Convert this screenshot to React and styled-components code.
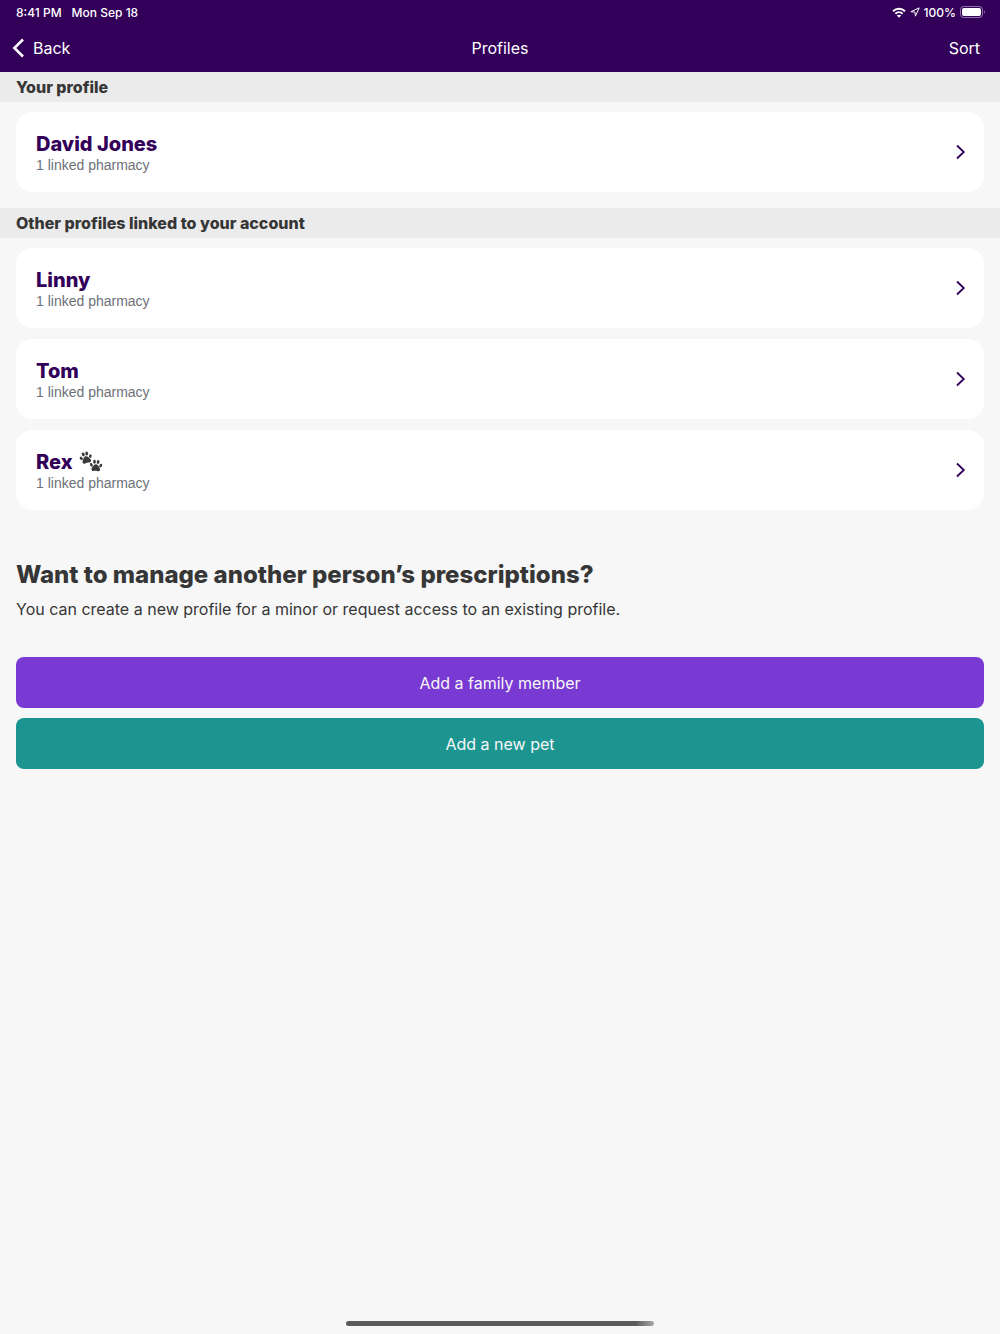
import React from "react";
import styled, { createGlobalStyle } from "styled-components";

const linkedProfiles = [
  { name: "Linny", pharmacies: "1 linked pharmacy" },
  { name: "Tom", pharmacies: "1 linked pharmacy" },
  { name: "Rex", pharmacies: "1 linked pharmacy", pet: true },
];

function PawPrint({ x, y, turn }) {
  return (
    <g transform={`translate(${x} ${y}) rotate(${turn})`}>
      <ellipse cx="-4.7" cy="-0.8" rx="1.3" ry="1.9" transform="rotate(-25 -4.7 -0.8)" />
      <ellipse cx="-1.8" cy="-4.2" rx="1.4" ry="2" transform="rotate(-8 -1.8 -4.2)" />
      <ellipse cx="1.8" cy="-4.2" rx="1.4" ry="2" transform="rotate(8 1.8 -4.2)" />
      <ellipse cx="4.7" cy="-0.8" rx="1.3" ry="1.9" transform="rotate(25 4.7 -0.8)" />
      <path d="M0-1.7C2-1.7 2.5.2 3.6 1.4 5.2 3.2 4 5.6 2 5.1.9 4.8-.9 4.8-2 5.1-4 5.6-5.2 3.2-3.6 1.4-2.5.2-2-1.7 0-1.7Z" />
    </g>
  );
}

function ProfileCard({ name, pharmacies, pet }) {
  return (
    <Card type="button">
      <CardText>
        <CardName>
          {name}
          {pet && (
            <svg width="24" height="22" viewBox="0 0 24 22" fill="#3a3a3a" aria-hidden="true">
              <PawPrint x={7} y={7} turn={-14} />
              <PawPrint x={17} y={15} turn={4} />
            </svg>
          )}
        </CardName>
        <CardDetail>{pharmacies}</CardDetail>
      </CardText>
      <svg width="10" height="16" viewBox="0 0 10 16" fill="none" stroke="#330059" strokeWidth="1.8" aria-hidden="true">
        <path d="M1 1.5 7.8 8 1 14.5" />
      </svg>
    </Card>
  );
}

function App() {
  return (
    <>
      <GlobalStyle />
      <Page>
        <Header>
          <StatusBar>
            <StatusGroup $gap="10px">
              <span>8:41 PM</span>
              <span>Mon Sep 18</span>
            </StatusGroup>
            <StatusGroup $gap="4px">
              <svg width="14" height="11" viewBox="0 0 14 11" fill="none" stroke="#fff" strokeWidth="2" aria-hidden="true">
                <path d="M1 4.2C4.4.8 9.6.8 13 4.2" />
                <path d="M3.4 6.7C5.4 4.8 8.6 4.8 10.6 6.7" />
                <path d="M7 10.8 4.9 8.6C6.1 7.5 7.9 7.5 9.1 8.6Z" fill="#fff" stroke="none" />
              </svg>
              <svg width="10" height="10" viewBox="0 0 10 10" fill="none" stroke="#fff" strokeLinejoin="round" aria-hidden="true">
                <path d="M9.2.9.9 4.7 5 5.1 5.4 9.2Z" />
              </svg>
              <span>100%</span>
              <svg width="25" height="12" viewBox="0 0 25 12" aria-hidden="true">
                <rect x=".5" y=".5" width="22" height="11" rx="3.2" fill="none" stroke="#fff" strokeOpacity=".45" />
                <rect x="2" y="2" width="19" height="8" rx="2" fill="#fff" />
                <path d="M24 4.2C25.1 4.8 25.1 7.2 24 7.8Z" fill="#fff" fillOpacity=".5" />
              </svg>
            </StatusGroup>
          </StatusBar>
          <NavBar>
            <NavButton type="button">
              <svg width="13" height="20" viewBox="0 0 13 20" fill="none" stroke="#fff" strokeWidth="2.6" aria-hidden="true">
                <path d="M11 1.5 2.4 10 11 18.5" />
              </svg>
              Back
            </NavButton>
            <Title>Profiles</Title>
            <NavButton type="button" $end>
              Sort
            </NavButton>
          </NavBar>
        </Header>

        <SectionHeading>Your profile</SectionHeading>
        <CardList>
          <ProfileCard name="David Jones" pharmacies="1 linked pharmacy" />
        </CardList>

        <SectionHeading>Other profiles linked to your account</SectionHeading>
        <CardList>
          {linkedProfiles.map((profile) => (
            <ProfileCard key={profile.name} {...profile} />
          ))}
        </CardList>

        <Manage>
          <h2>Want to manage another person’s prescriptions?</h2>
          <p>You can create a new profile for a minor or request access to an existing profile.</p>
          <Actions>
            <ActionButton type="button" $color="#793ad3">
              Add a family member
            </ActionButton>
            <ActionButton type="button" $color="#1c9591">
              Add a new pet
            </ActionButton>
          </Actions>
        </Manage>

        <HomeIndicator />
      </Page>
    </>
  );
}

const GlobalStyle = createGlobalStyle`
  * {
    box-sizing: border-box;
  }

  body {
    margin: 0;
    background: #f7f7f7;
    color: #363636;
    font-family: Inter, "Liberation Sans", sans-serif;
  }

  button {
    border: 0;
    font-family: inherit;
    cursor: pointer;
  }

  svg {
    display: block;
    flex-shrink: 0;
  }
`;

const Page = styled.main`
  display: flex;
  flex-direction: column;
  min-height: 100vh;
`;

const Header = styled.header`
  background: #330059;
  color: white;
`;

const StatusBar = styled.div`
  display: flex;
  justify-content: space-between;
  align-items: center;
  height: 24px;
  padding: 0 15px 0 16px;
  font-size: 12px;
  font-weight: 500;
`;

const StatusGroup = styled.div`
  display: flex;
  align-items: center;
  gap: ${(props) => props.$gap};
`;

const NavBar = styled.nav`
  display: grid;
  grid-template-columns: 1fr auto 1fr;
  align-items: center;
  height: 48px;
  padding: 0 12px;
`;

const NavButton = styled.button`
  display: flex;
  align-items: center;
  justify-self: ${(props) => (props.$end ? "end" : "start")};
  gap: 8px;
  padding: ${(props) => (props.$end ? "0 8px" : "0")};
  background: none;
  color: white;
  font-size: 16px;
  line-height: 24px;
`;

const Title = styled.h1`
  margin: 0;
  font-size: 16px;
  font-weight: 400;
  line-height: 24px;
`;

const SectionHeading = styled.h2`
  margin: 0;
  padding: 0 16px;
  background: #ebebeb;
  font-size: 16px;
  font-weight: 800;
  line-height: 30px;
`;

const CardList = styled.div`
  display: flex;
  flex-direction: column;
  gap: 11px;
  padding: 10px 16px 16px;
`;

const Card = styled.button`
  display: flex;
  justify-content: space-between;
  align-items: center;
  min-height: 80px;
  padding: 8px 18px 8px 20px;
  border-radius: 16px;
  background: white;
  text-align: left;
`;

const CardText = styled.span`
  display: flex;
  flex-direction: column;
  padding-top: 4px;
`;

const CardName = styled.span`
  display: flex;
  align-items: center;
  gap: 6px;
  color: #330059;
  font-size: 20px;
  font-weight: 800;
  line-height: 22px;
`;

const CardDetail = styled.span`
  color: #6c7078;
  font-family: "Liberation Sans", Arial, sans-serif;
  font-size: 14px;
  line-height: 20px;
`;

const Manage = styled.section`
  padding: 33px 16px;

  h2 {
    margin: 0;
    font-size: 24px;
    font-weight: 800;
    line-height: 32px;
  }

  p {
    margin: 6px 0 36px;
    font-size: 16px;
    line-height: 24px;
  }
`;

const Actions = styled.div`
  display: flex;
  flex-direction: column;
  gap: 10px;
`;

const ActionButton = styled.button`
  height: 51px;
  border-radius: 8px;
  background: ${(props) => props.$color};
  color: #f7f7f7;
  font-size: 16px;
`;

const HomeIndicator = styled.div`
  width: 308px;
  height: 5px;
  margin: auto auto 8px;
  border-radius: 3px;
  background: linear-gradient(90deg, #5a5a5a 94%, #a8a8a8);
`;

export default App;
